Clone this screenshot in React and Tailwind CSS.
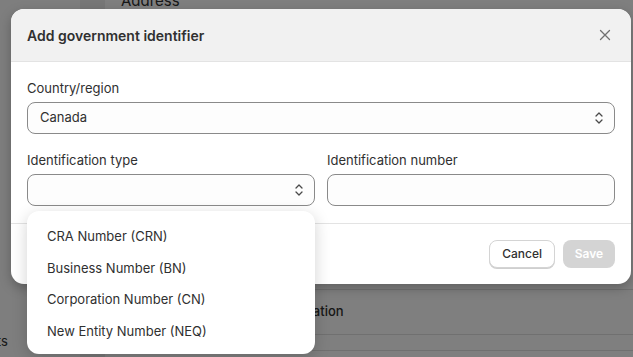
import React from 'react';

const font = { fontFamily: 'Inter, "Noto Sans", sans-serif' };

function UpDown() {
  return (
    <svg className="w-[10px] h-[14px] text-[#4a4a4a]" viewBox="0 0 10 14" fill="none" stroke="currentColor" strokeWidth="1.3" strokeLinecap="round" strokeLinejoin="round">
      <path d="M2 5l3-3 3 3" />
      <path d="M2 9l3 3 3-3" />
    </svg>
  );
}

const options = ['CRA Number (CRN)', 'Business Number (BN)', 'Corporation Number (CN)', 'New Entity Number (NEQ)'];

export default function App() {
  return (
    <div className="relative w-[633px] h-[357px] overflow-hidden bg-white text-[#303030]" style={font}>
      {/* Page behind the modal */}
      <div className="flex h-full">
        <div className="w-[80px] flex flex-col justify-end pb-[6px] bg-[#fdfdfd]">
          <span className="text-[13px] -ml-[47px] whitespace-nowrap">Products</span>
        </div>
        <div className="w-[25px] bg-[#efefef]" />
        <div className="flex-1 flex flex-col">
          <div className="pl-[16px] -mt-[10px] text-[15px] h-[299px]">Address</div>
          <div className="border-t border-[#e0e0e0] h-[45px] flex items-center pl-[185px] text-[13px] font-medium">Location</div>
          <div className="border-t border-[#e0e0e0] h-[16px]" />
          <div className="border-t border-[#e0e0e0] flex-1" />
        </div>
      </div>

      {/* Overlay */}
      <div className="absolute inset-0 bg-black/50" />

      {/* Modal */}
      <div className="absolute left-[11px] top-[9px] w-[620px] bg-white rounded-[13px] shadow-[0_4px_12px_rgba(0,0,0,0.25)] overflow-hidden">
        <div className="h-[53px] bg-[#f1f1f1] border-b border-[#e3e3e3] flex items-center justify-between pl-4 pr-[16px]">
          <h2 className="text-[14px] font-semibold text-[#303030]">Add government identifier</h2>
          <button className="w-[20px] h-[20px] flex items-center justify-center text-[#707070]">
            <svg className="w-[12px] h-[12px]" viewBox="0 0 12 12" fill="none" stroke="currentColor" strokeWidth="1.3" strokeLinecap="round">
              <path d="M1.5 1.5l9 9M10.5 1.5l-9 9" />
            </svg>
          </button>
        </div>

        <div className="px-4 pt-4 pb-[17px] border-b border-[#e3e3e3] flex flex-col gap-4">
          <div className="flex flex-col gap-1">
            <label className="text-[13px] leading-5">Country/region</label>
            <div className="h-[32px] rounded-lg border border-[#8a8a8a] bg-[#fdfdfd] flex items-center justify-between pl-3 pr-[10px]">
              <span className="text-[13px]">Canada</span>
              <UpDown />
            </div>
          </div>
          <div className="flex gap-3">
            <div className="flex-1 flex flex-col gap-1">
              <label className="text-[13px] leading-5">Identification type</label>
              <div className="h-[32px] rounded-lg border border-[#8a8a8a] bg-[#fdfdfd] flex items-center justify-end pr-[10px]">
                <UpDown />
              </div>
            </div>
            <div className="flex-1 flex flex-col gap-1">
              <label className="text-[13px] leading-5">Identification number</label>
              <div className="h-[32px] rounded-lg border border-[#8a8a8a] bg-[#fdfdfd]" />
            </div>
          </div>
        </div>

        <div className="h-[60px] flex items-center justify-end gap-2 px-4">
          <button className="h-[28px] px-3 rounded-lg bg-white border border-[#d4d4d4] shadow-[0_1px_0_#cfcfcf] text-[12px] font-medium text-[#303030]">Cancel</button>
          <button className="h-[28px] w-[52px] rounded-lg bg-[#d4d4d4] text-[12px] font-semibold text-white">Save</button>
        </div>
      </div>

      {/* Dropdown list */}
      <div className="absolute left-[27px] top-[211px] w-[288px] bg-white rounded-xl shadow-[0_4px_16px_rgba(0,0,0,0.18)] pt-[10px] pb-[7px]">
        {options.map((o) => (
          <div key={o} className="h-[31.5px] flex items-center px-5 text-[13px] text-[#303030]">{o}</div>
        ))}
      </div>
    </div>
  );
}
